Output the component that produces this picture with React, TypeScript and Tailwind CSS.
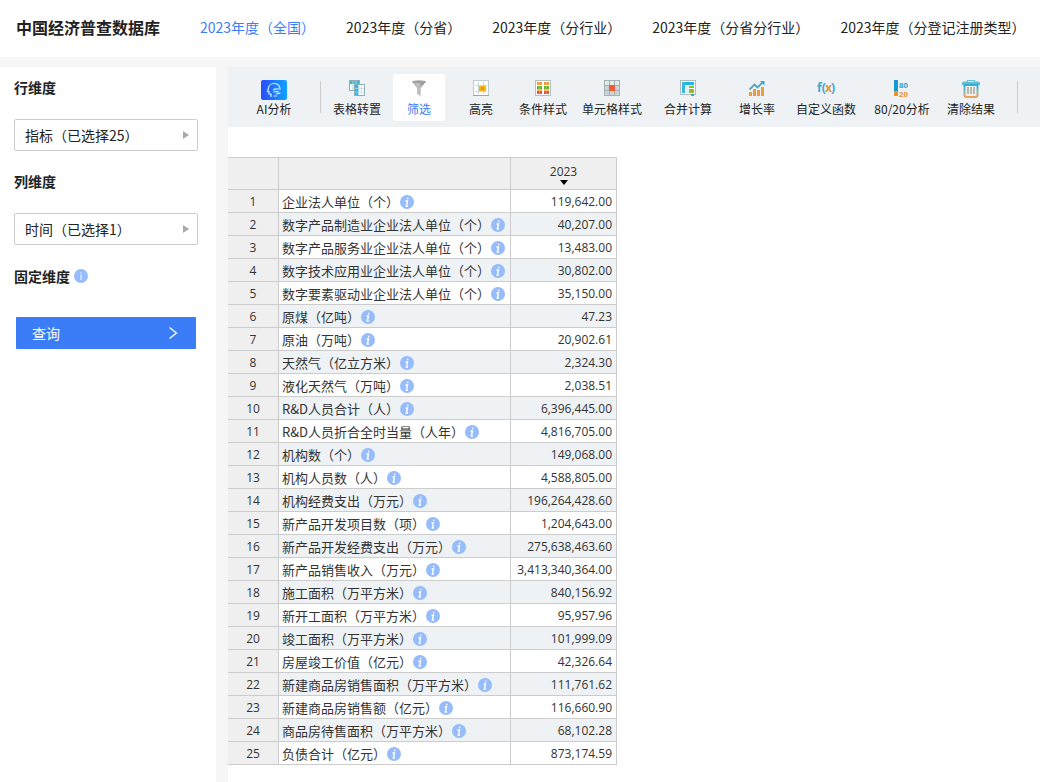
import { useState } from 'react';
import type { ReactNode } from 'react';

const tabs = [
  '2023年度（全国）',
  '2023年度（分省）',
  '2023年度（分行业）',
  '2023年度（分省分行业）',
  '2023年度（分登记注册类型）',
];

const rows: [string, string][] = [
  ['企业法人单位（个）', '119,642.00'],
  ['数字产品制造业企业法人单位（个）', '40,207.00'],
  ['数字产品服务业企业法人单位（个）', '13,483.00'],
  ['数字技术应用业企业法人单位（个）', '30,802.00'],
  ['数字要素驱动业企业法人单位（个）', '35,150.00'],
  ['原煤（亿吨）', '47.23'],
  ['原油（万吨）', '20,902.61'],
  ['天然气（亿立方米）', '2,324.30'],
  ['液化天然气（万吨）', '2,038.51'],
  ['R&D人员合计（人）', '6,396,445.00'],
  ['R&D人员折合全时当量（人年）', '4,816,705.00'],
  ['机构数（个）', '149,068.00'],
  ['机构人员数（人）', '4,588,805.00'],
  ['机构经费支出（万元）', '196,264,428.60'],
  ['新产品开发项目数（项）', '1,204,643.00'],
  ['新产品开发经费支出（万元）', '275,638,463.60'],
  ['新产品销售收入（万元）', '3,413,340,364.00'],
  ['施工面积（万平方米）', '840,156.92'],
  ['新开工面积（万平方米）', '95,957.96'],
  ['竣工面积（万平方米）', '101,999.09'],
  ['房屋竣工价值（亿元）', '42,326.64'],
  ['新建商品房销售面积（万平方米）', '111,761.62'],
  ['新建商品房销售额（亿元）', '116,660.90'],
  ['商品房待售面积（万平方米）', '68,102.28'],
  ['负债合计（亿元）', '873,174.59'],
];

function AiIcon() {
  return (
    <svg width="26" height="20" viewBox="0 0 26 20">
      <defs>
        <linearGradient id="ai" x1="0" x2="1">
          <stop offset="0" stopColor="#2b4dff" />
          <stop offset="1" stopColor="#10a4ff" />
        </linearGradient>
      </defs>
      <rect width="26" height="20" rx="2" fill="url(#ai)" />
      <g fill="none" stroke="#d9ecff" strokeWidth="1.2" strokeLinecap="round">
        <path d="M19 8C18 4.500 15.500 3.500 13 3.500C9.500 3.500 7.500 6 7.500 8.500L6.500 11.500H8V14H10V16.500" />
        <path d="M12.500 10C14 8.500 15 8.500 16.500 9H19.500M13 12C15 11 16 12 17.500 11.500M15.500 14C17 13 18 13.500 19 13M13 16H15.500" />
      </g>
    </svg>
  );
}

function TransposeIcon() {
  return (
    <svg width="16" height="16" viewBox="0 0 16 16">
      <rect x=".5" y=".5" width="10" height="10" fill="#f4fafa" stroke="#8fb0b2" />
      <path d="M1 2.500H10" stroke="#35b6dc" strokeWidth="3" />
      <path d="M4 1V10M7 1V10" stroke="#b9d4d6" />
      <rect x="5.500" y="4.500" width="10" height="11" fill="#fff" stroke="#8fb0b2" />
      <rect x="6" y="5" width="3.500" height="10" fill="#35b6ee" />
      <path d="M12.500 5V15M6 8.500H15M6 12H15" stroke="#c4d5d6" strokeWidth=".7" />
    </svg>
  );
}

function FilterIcon() {
  return (
    <svg width="16" height="16" viewBox="0 0 16 16">
      <defs>
        <linearGradient id="funnel" x1="0" x2="1">
          <stop offset="0" stopColor="#a9a9a9" />
          <stop offset=".45" stopColor="#c4c4c4" />
          <stop offset="1" stopColor="#777" />
        </linearGradient>
      </defs>
      <path d="M1 1.500L6 8V14L9.500 16V8L15 1.500Z" fill="url(#funnel)" />
      <ellipse cx="8" cy="1.700" rx="7" ry="1.500" fill="#a3a09f" />
    </svg>
  );
}

function HighlightIcon() {
  return (
    <svg width="16" height="16" viewBox="0 0 16 16">
      <rect x=".5" y=".5" width="15" height="15" fill="#fff" stroke="#c3cdce" />
      <path d="M5.500 2V14M10.500 2V14M2 5.500H14M2 11.500H14" stroke="#c9d8d8" />
      <rect x="6" y="6" width="7" height="5" fill="#f5b818" />
      <rect x="8" y="7" width="3" height="3" fill="#f09a00" />
      <path d="M0 15.500H16" stroke="#9aa9aa" />
    </svg>
  );
}

function ConditionIcon() {
  return (
    <svg width="16" height="16" viewBox="0 0 16 16">
      <rect x=".5" y=".5" width="15" height="15" fill="#fff" stroke="#b3c0c1" />
      <path d="M2 3.500H7M9 3.500H14" stroke="#ef9b36" strokeWidth="3" />
      <path d="M2 7.500H7M9 7.500H14" stroke="#6db52d" strokeWidth="3" />
      <path d="M2 10H7M9 10H14" stroke="#f5b860" strokeWidth="2" />
      <path d="M2 12.500H7M9 12.500H14" stroke="#ef5045" strokeWidth="3" />
      <path d="M4.500 2V14M11.500 2V14" stroke="#fff" strokeOpacity=".2" />
    </svg>
  );
}

function CellStyleIcon() {
  return (
    <svg width="16" height="16" viewBox="0 0 16 16">
      <rect width="16" height="16" fill="#a4b2b3" />
      <path d="M1 1H5V5H1ZM6 1H10V5H6ZM11 1H15V5H11Z" fill="#e4eaea" />
      <path d="M1 6H5V10H1ZM11 6H15V10H11ZM1 11H5V15H1ZM6 11H10V15H6ZM11 11H15V15H11Z" fill="#ccd5d5" />
      <rect x="5" y="5" width="6" height="6" fill="#f15a33" />
    </svg>
  );
}

function MergeIcon() {
  return (
    <svg width="16" height="16" viewBox="0 0 16 16">
      <rect x=".5" y=".5" width="15" height="14" fill="#fff" stroke="#aebcbd" />
      <path d="M2 3.500H14" stroke="#1fb5e8" strokeWidth="3" />
      <path d="M3.500 2V13" stroke="#31b9e6" strokeWidth="3" />
      <rect x="6" y="6" width="3" height="7" fill="#e2f0f4" />
      <path d="M9 6H14V8H9ZM9 9H14V13H9Z" fill="#8bbf22" />
      <path d="M11 15H14" stroke="#28a7d4" strokeWidth="2" />
    </svg>
  );
}

function GrowthIcon() {
  return (
    <svg width="16" height="16" viewBox="0 0 16 16">
      <path d="M0 12H3V16H0ZM4 9H7V16H4ZM8 10H11V16H8ZM12 7H15V16H12Z" fill="#ee9a45" />
      <path d="M.5 9.500L5.500 4.500L8.500 7.500L14 2" fill="none" stroke="#4ba9bf" strokeWidth="1.800" />
      <path d="M11 1H15.500V5.500Z" fill="#2ba9de" />
    </svg>
  );
}

function FunctionIcon() {
  return (
    <svg width="18" height="16" viewBox="0 0 18 16" fontFamily="Open Sans, sans-serif" fontWeight="700" fontSize="12">
      <text x="0" y="12" fill="#39a9d5">f(</text>
      <text x="8" y="12" fill="#e5943b">x</text>
      <text x="14" y="12" fill="#39a9d5">)</text>
    </svg>
  );
}

function ParetoIcon() {
  return (
    <svg width="16" height="19" viewBox="0 0 16 19" fontFamily="Liberation Sans, sans-serif" fontWeight="700" fontSize="8">
      <rect width="4" height="11" fill="#149bd7" />
      <rect y="11" width="4" height="5" fill="#f09224" />
      <text x="5" y="8" fill="#239fd5">80</text>
      <text x="5" y="17" fill="#e88b1c">20</text>
    </svg>
  );
}

function TrashIcon() {
  return (
    <svg width="18" height="18" viewBox="0 0 18 18">
      <defs>
        <linearGradient id="trash" x1="0" x2="0" y1="0" y2="1">
          <stop offset="0" stopColor="#2faedb" />
          <stop offset=".55" stopColor="#8ab7ba" />
          <stop offset="1" stopColor="#f0a052" />
        </linearGradient>
      </defs>
      <path d="M0 2.500L2 1.500H5V0H13V1.500H16L18 2.500V5H0Z" fill="#65bad4" />
      <path d="M6 1.500H12" stroke="#d5eff7" />
      <path d="M2.500 5V15Q2.500 17 4.500 17H13.500Q15.500 17 15.500 15V5Z" fill="#f4f1eb" stroke="url(#trash)" strokeWidth="2" />
      <path d="M6 7V14M9 7V14M12 7V14" stroke="#a4a49d" strokeWidth="1.500" />
    </svg>
  );
}

function InfoIcon({ italic = false }: { italic?: boolean }) {
  return (
    <svg className="shrink-0" width="14" height="14" viewBox="0 0 14 14" aria-hidden="true">
      <circle cx="7" cy="7" r="7" fill="#97bcfb" />
      {italic ? (
        <path d="M5.500 6H7.500L6.300 11H8M7.700 2.800V4.300" fill="none" stroke="#fff" strokeWidth="1.400" />
      ) : (
        <path d="M7 6V11M7 3.500V5" stroke="#e3edff" strokeWidth="1.400" />
      )}
    </svg>
  );
}

interface ToolProps {
  icon: ReactNode;
  label: string;
  wide?: boolean;
  active?: boolean;
}

function Tool({ icon, label, wide, active }: ToolProps) {
  return (
    <button
      type="button"
      className={`flex h-[47px] shrink-0 flex-col items-center rounded-[3px] pt-1.5 text-xs whitespace-nowrap ${
        wide ? 'w-[66px]' : 'w-[52px]'
      } ${active ? 'bg-white text-[#3b7df6]' : ''}`}
    >
      <span className="flex h-5 items-start">{icon}</span>
      <span className="leading-[18px]">{label}</span>
    </button>
  );
}

function Divider() {
  return <span className="ml-[10px] h-8 w-px shrink-0 bg-[#ccc]" />;
}

function DimensionButton({ label }: { label: string }) {
  return (
    <button
      type="button"
      className="my-[21px] flex h-8 items-center justify-between rounded-[2px] border border-[#ccc] pr-2 pl-[10px] text-sm"
    >
      {label}
      <svg width="6" height="8" viewBox="0 0 6 8">
        <path d="M0 0L6 4L0 8Z" fill="#aaa" />
      </svg>
    </button>
  );
}

export default function App() {
  const [activeTab, setActiveTab] = useState(0);

  return (
    <div className="flex min-h-screen flex-col overflow-x-hidden bg-[#f6f6f6] font-['Noto_Sans_CJK_SC',sans-serif] text-[#222]">
      <header className="flex h-[57px] items-center bg-white pb-1 pl-4">
        <h1 className="w-[184px] shrink-0 text-base font-bold whitespace-nowrap">中国经济普查数据库</h1>
        <nav className="flex gap-[31px] text-sm whitespace-nowrap">
          {tabs.map((tab, i) => (
            <a
              key={tab}
              href="#"
              onClick={() => setActiveTab(i)}
              className={i === activeTab ? 'text-[#3b7df6]' : 'text-[#222]'}
            >
              {tab}
            </a>
          ))}
        </nav>
      </header>

      <div className="mt-[10px] flex grow gap-3">
        {/* Dimensions */}
        <aside className="flex w-[216px] shrink-0 flex-col bg-white pt-[11px] pr-[18px] pl-[14px]">
          <h2 className="h-5 text-sm leading-[18px] font-bold">行维度</h2>
          <DimensionButton label="指标（已选择25）" />
          <h2 className="h-5 text-sm leading-[18px] font-bold">列维度</h2>
          <DimensionButton label="时间（已选择1）" />
          <h2 className="flex h-5 items-center gap-1 text-sm leading-[18px] font-bold">
            固定维度
            <InfoIcon />
          </h2>
          <button
            type="button"
            className="mx-0.5 mt-[31px] flex h-8 items-center justify-between rounded-[1px] bg-[#3b7df6] px-4 text-sm text-white"
          >
            查询
            <svg width="14" height="14" viewBox="0 0 14 14" fill="none" stroke="#fff" strokeWidth="1.300">
              <path d="M3.500 1.500L10.500 7L3.500 12.500" />
            </svg>
          </button>
        </aside>

        <main className="min-w-0 grow bg-white">
          {/* Toolbar */}
          <div className="flex h-[60px] items-center gap-[10px] overflow-hidden bg-[#eef2f5] pl-5">
            <Tool icon={<AiIcon />} label="AI分析" />
            <Divider />
            <Tool icon={<TransposeIcon />} label="表格转置" />
            <Tool icon={<FilterIcon />} label="筛选" active />
            <Tool icon={<HighlightIcon />} label="高亮" />
            <Tool icon={<ConditionIcon />} label="条件样式" />
            <Tool icon={<CellStyleIcon />} label="单元格样式" wide />
            <Tool icon={<MergeIcon />} label="合并计算" wide />
            <Tool icon={<GrowthIcon />} label="增长率" />
            <Tool icon={<FunctionIcon />} label="自定义函数" wide />
            <Tool icon={<ParetoIcon />} label="80/20分析" wide />
            <Tool icon={<TrashIcon />} label="清除结果" />
            <Divider />
          </div>

          {/* Data table */}
          <table className="mt-[30px] table-fixed border-separate border-spacing-0 border-t border-[#ccc] text-[13px] text-[#333]">
            <colgroup>
              <col className="w-[51px]" />
              <col className="w-[232px]" />
              <col className="w-[106px]" />
            </colgroup>
            <thead>
              <tr className="h-8 bg-[#efefef]">
                <th className="border-r border-b border-[#ccc]" />
                <th className="border-r border-b border-[#ccc]" />
                <th className="border-r border-b border-[#ccc] p-0 pt-0.5 font-['Open_Sans',sans-serif] text-xs font-normal">
                  <button type="button" className="flex w-full flex-col items-center leading-4">
                    2023
                    <svg width="8" height="5" viewBox="0 0 8 5">
                      <path d="M0 0H8L4 5Z" fill="#000" />
                    </svg>
                  </button>
                </th>
              </tr>
            </thead>
            <tbody>
              {rows.map(([name, value], i) => (
                <tr key={name} className="h-[23px] even:bg-[#eef2f5]">
                  <td className="border-r border-b border-[#ccc] bg-[#efefef] p-0 pt-0.5 text-center font-['Open_Sans',sans-serif] text-xs">
                    {i + 1}
                  </td>
                  <td className="border-r border-b border-[#ccc] p-0 pt-0.5 pl-[3px] leading-5 whitespace-nowrap">
                    <span className="flex items-center gap-px">
                      {name}
                      <InfoIcon italic />
                    </span>
                  </td>
                  <td className="border-r border-b border-[#ccc] p-0 pt-0.5 pr-1 text-right font-['Open_Sans',sans-serif] text-xs">
                    {value}
                  </td>
                </tr>
              ))}
            </tbody>
          </table>
        </main>
      </div>
    </div>
  );
}
